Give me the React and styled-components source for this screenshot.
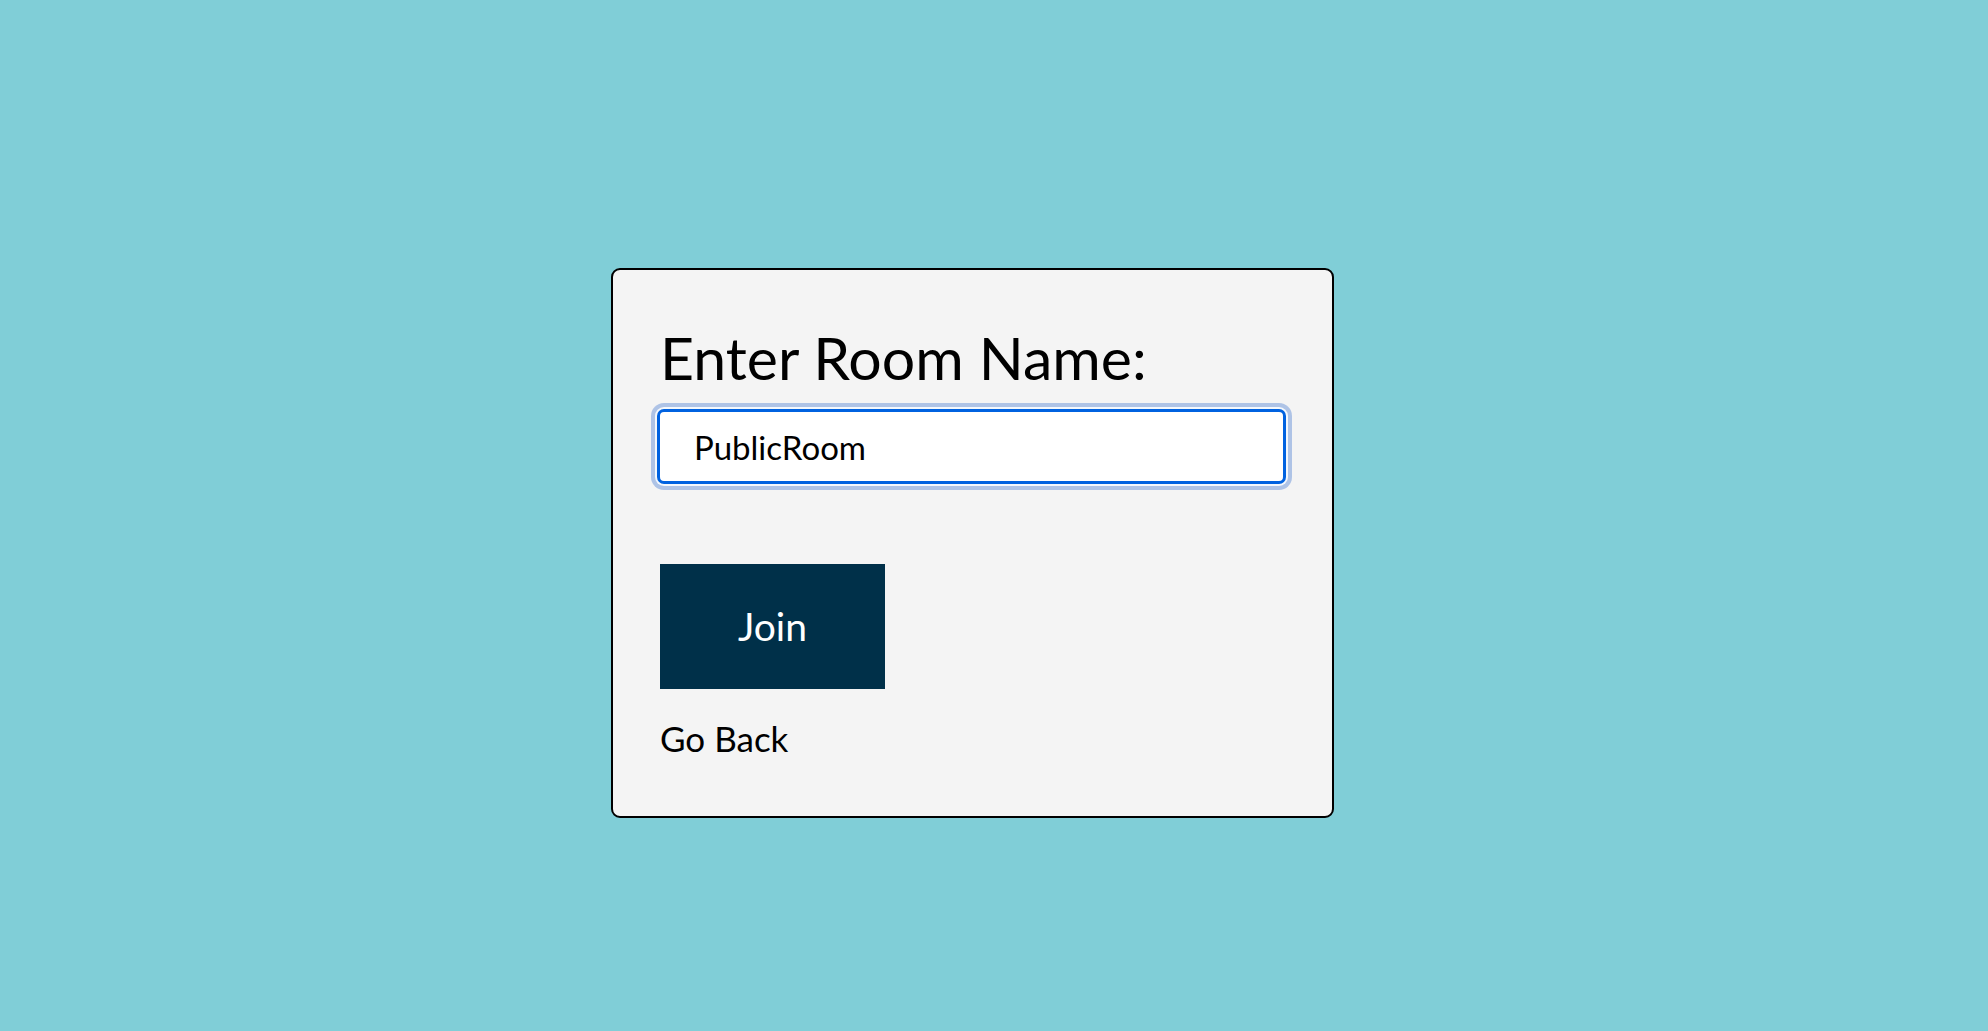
import React, { useState } from 'react'
import styled, { createGlobalStyle } from 'styled-components'

const GlobalStyle = createGlobalStyle`
  html, body {
    margin: 0;
    padding: 0;
    background: #80ced7;
    font-family: Lato, "Noto Sans", sans-serif;
  }
  * { box-sizing: border-box; }
`

const Page = styled.main`
  min-height: 1031px;
  display: flex;
  align-items: flex-start;
  padding: 268px 0 0 611px;
`

const Card = styled.section`
  width: 723px;
  height: 550px;
  background: #f4f4f4;
  border: 2px solid #000;
  border-radius: 9px;
  padding: 53px 43px 0 47px;
  display: flex;
  flex-direction: column;
  align-items: flex-start;
`

const Title = styled.h1`
  margin: 0;
  font-size: 59px;
  font-weight: 400;
  line-height: 1.2;
  color: #000;
`

const RoomInput = styled.input`
  margin: 15px 0 0 -3px;
  width: 629px;
  height: 75px;
  border: 3px solid #0062e0;
  border-radius: 7px;
  background: #fff;
  padding: 2px 34px 0;
  font-family: inherit;
  font-size: 33px;
  color: #000;
  box-shadow: 0 0 0 2px #f4f8fd, 0 0 0 6px #aec3e6;
  outline: none;
  caret-color: #000;
`

const JoinButton = styled.button`
  margin-top: 80px;
  width: 225px;
  height: 125px;
  border: none;
  background: #003049;
  color: #fff;
  font-family: inherit;
  font-size: 39px;
  cursor: pointer;
`

const BackLink = styled.button`
  margin-top: 28px;
  padding: 0;
  border: none;
  background: none;
  font-family: inherit;
  font-size: 35px;
  line-height: 1.2;
  color: #000;
  cursor: pointer;
`

export default function App() {
  const [room, setRoom] = useState('PublicRoom')
  return (
    <>
      <GlobalStyle />
      <Page>
        <Card>
          <Title>Enter Room Name:</Title>
          <RoomInput autoFocus value={room} onChange={(e) => setRoom(e.target.value)} />
          <JoinButton>Join</JoinButton>
          <BackLink>Go Back</BackLink>
        </Card>
      </Page>
    </>
  )
}
